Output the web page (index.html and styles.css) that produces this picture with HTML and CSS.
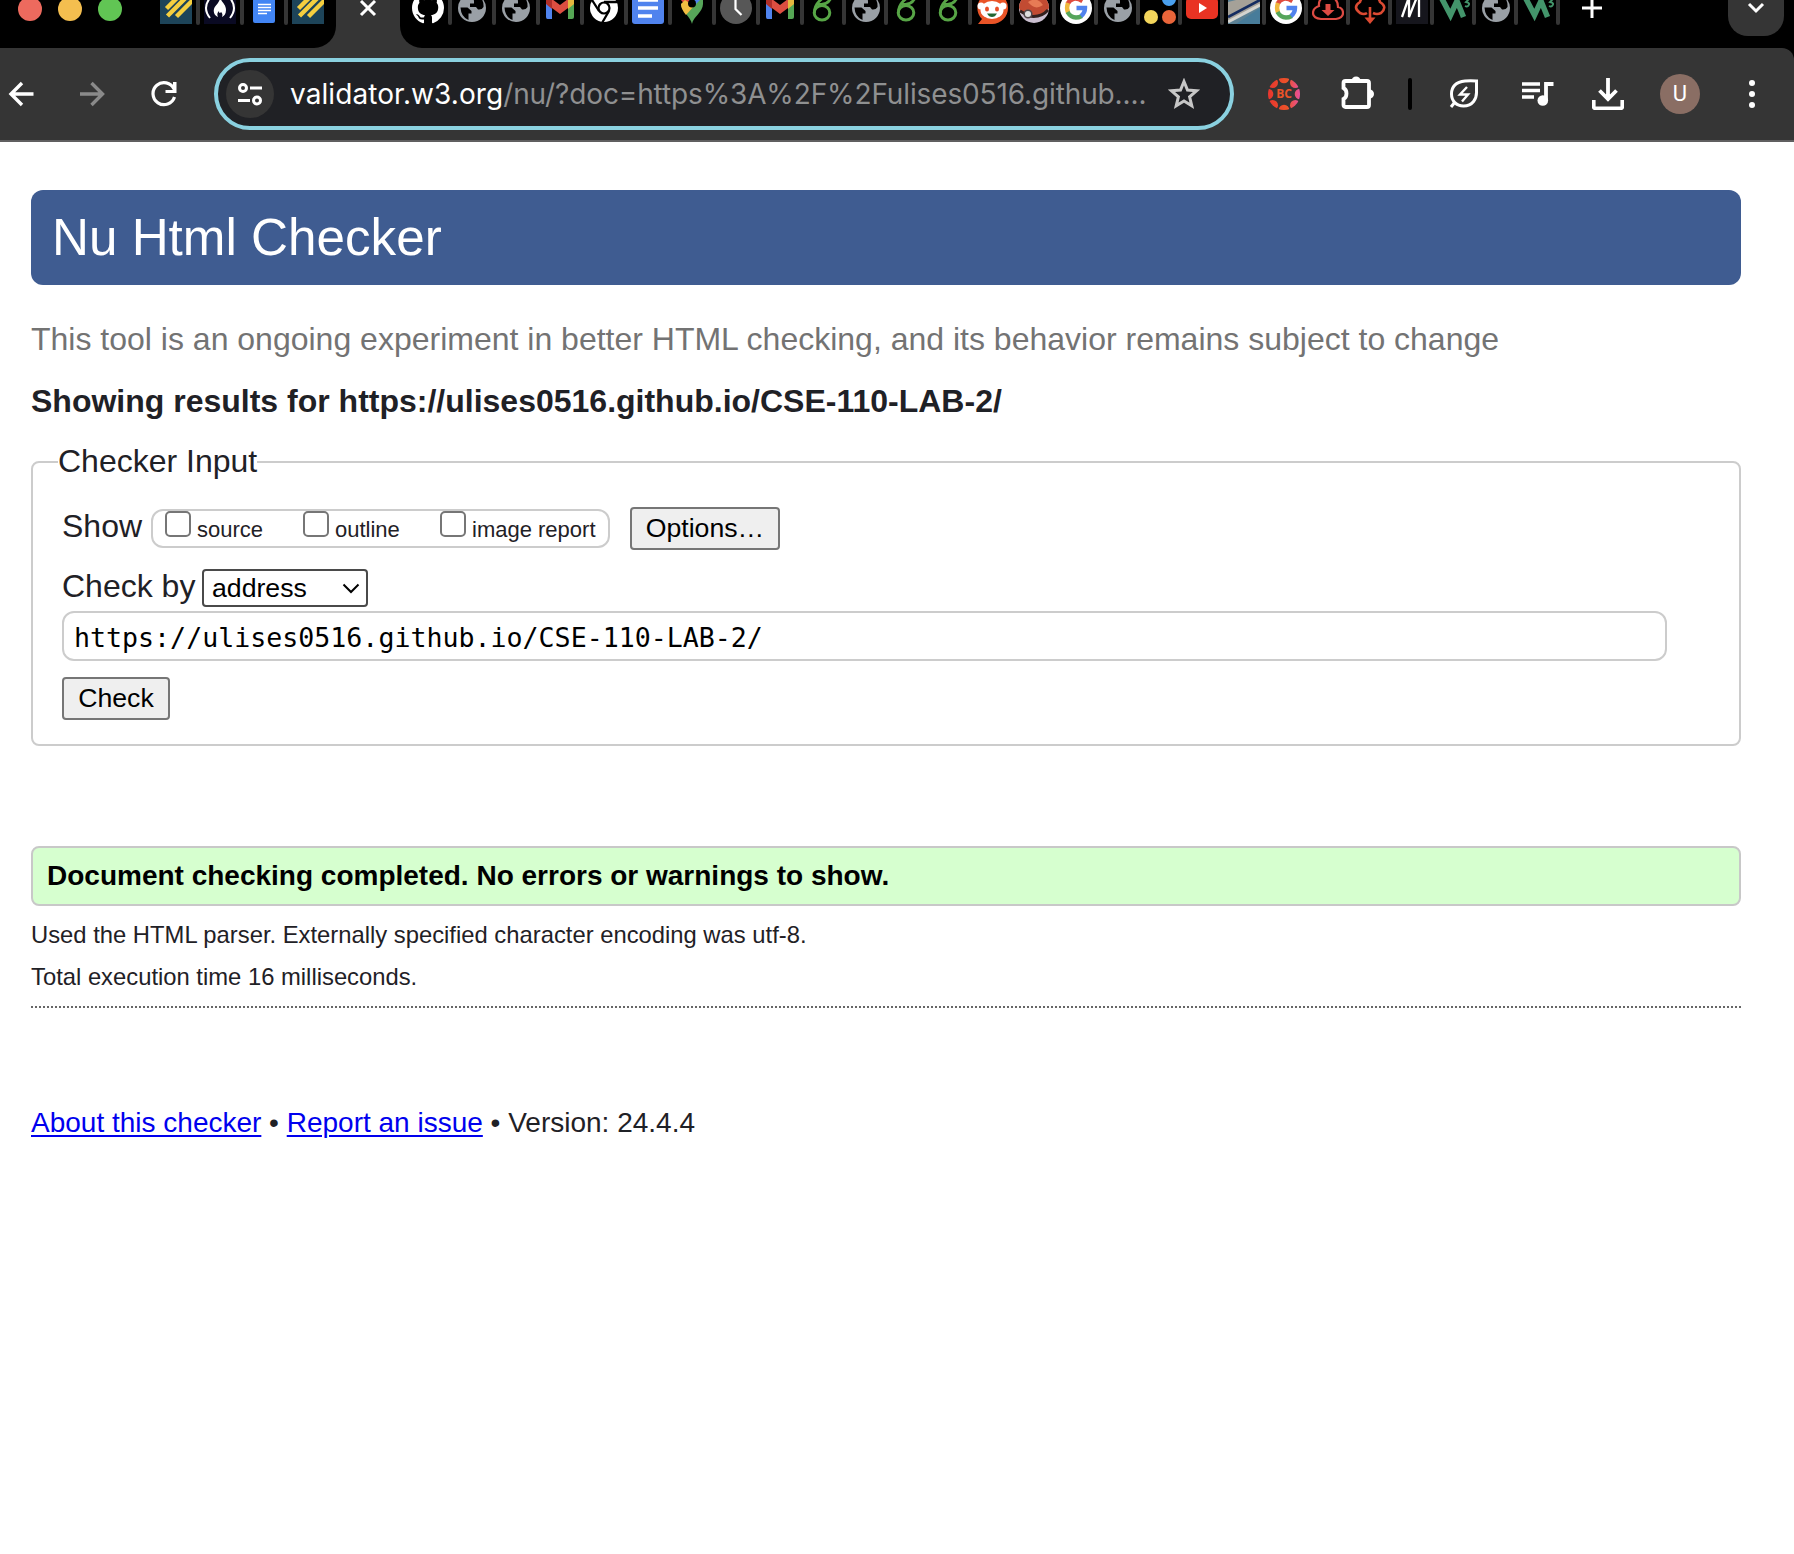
FILE: index.html
```html
<!DOCTYPE html>
<html lang="en">
<head>
<meta charset="utf-8">
<title>Nu Html Checker</title>
<link rel="stylesheet" href="styles.css">
</head>
<body>
<svg class="defs" width="0" height="0" aria-hidden="true">
  <symbol id="i-stripes" viewBox="0 0 32 32"><path fill="#1d4459" d="M0 0h32v32H0z"/><path stroke="#f5cf3f" stroke-width="4.4" d="M6.500 16.500 22 1M7.500 24 27 4.500M16.500 24.500 35 6" fill="none"/></symbol>
  <symbol id="i-fcc" viewBox="0 0 32 32"><path fill="#0a0a23" d="M0 0h32v32H0z"/><path fill="none" stroke="#fff" stroke-width="2" d="M6 6Q-2 16 6 26M26 6q8 10 0 20"/><path fill="#fff" d="M16 5c1 5 6 7 6 13 0 4-2 6-4 7 1-3 0-4-1-5-1 2-2 1-2-1-2 2-2 4-1 6-3-1-5-4-4-8 1-4 6-6 6-12z"/></symbol>
  <symbol id="i-docs" viewBox="0 0 32 32"><path fill="#4285f4" d="M5 0h16l6 7v22q0 2-2 2H7q-2 0-2-2z"/><path stroke="#fff" stroke-width="1.6" d="M10 12.500h13M10 15.500h13M10 18.500h13M10 21.500h9"/></symbol>
  <symbol id="i-docs2" viewBox="0 0 32 32"><path fill="#5083ee" d="M0 0h32v29q0 3-3 3H3q-3 0-3-3z"/><path stroke="#fff" stroke-width="3.600" d="M6 8h20M6 16h20M6 24h14"/></symbol>
  <symbol id="i-github" viewBox="0 0 16 16"><path fill="#fff" d="M8 0C3.58 0 0 3.58 0 8c0 3.54 2.29 6.53 5.47 7.59.4.07.55-.17.55-.38 0-.19-.01-.82-.01-1.49-2.01.37-2.53-.49-2.69-.94-.09-.23-.48-.94-.82-1.13-.28-.15-.68-.52-.01-.53.63-.01 1.08.58 1.23.82.72 1.21 1.87.87 2.33.66.07-.52.28-.87.51-1.07-1.78-.2-3.64-.89-3.64-3.95 0-.87.31-1.59.82-2.15-.08-.2-.36-1.02.08-2.12 0 0 .67-.21 2.2.82.64-.18 1.32-.27 2-.27s1.36.09 2 .27c1.53-1.04 2.2-.82 2.2-.82.44 1.1.16 1.92.08 2.12.51.56.82 1.27.82 2.15 0 3.07-1.87 3.75-3.65 3.95.29.25.54.73.54 1.48 0 1.07-.01 1.93-.01 2.2 0 .21.15.46.55.38A8.01 8.01 0 0 0 16 8c0-4.42-3.58-8-8-8z"/></symbol>
  <symbol id="i-globe" viewBox="0 0 32 32"><circle cx="16" cy="16" r="14" fill="#9aa0a6"/><path fill="#000" d="M4.500 15.500h7l4 3.500v2.500h-3v6.500Q5 25 4.500 15.500zM17 4h6q5 4 4.500 11-1.500 3-5.500 2.500l-2-2.500h-6v-3.500h4V9z"/></symbol>
  <symbol id="i-gmail" viewBox="0 0 32 32"><path fill="#4f83ee" d="M2 9h6v18H3.500Q2 27 2 25z"/><path fill="#55a654" d="M24 9h6v16q0 2-2 2h-4z"/><path fill="#e6b73f" d="M24 7l6-1v6l-6 5z"/><path fill="#b0302a" d="M2 6l6 1v10l-6-5z"/><path fill="#dc4e41" d="M8 7l8 6 8-6v9l-8 6-8-6z"/></symbol>
  <symbol id="i-chrome" viewBox="0 0 32 32"><circle cx="16" cy="16" r="14" fill="#fff"/><circle cx="16" cy="16" r="5.500" fill="none" stroke="#000" stroke-width="2.200"/><path fill="none" stroke="#000" stroke-width="2.300" d="M16 10h13M11 19 4 8M21 19l-7 12"/></symbol>
  <symbol id="i-maps" viewBox="0 0 32 32"><path fill="#56a559" d="M5 12c0 7 10 13 11 20 1-7 11-12 11-20V5z"/><path fill="#4d83ed" d="M16 0q8 0 10 6l-9 9-5-5z"/><path fill="#e04a3f" d="M5 8q2-6 9-8l-1 10-4 3z"/><path fill="#f2bd42" d="M5 12l4-4 9 6-8 9q-5-6-5-11z"/><circle cx="16" cy="11.500" r="4" fill="#000"/></symbol>
  <symbol id="i-clock" viewBox="0 0 32 32"><circle cx="16" cy="16" r="16" fill="#575757"/><path fill="none" stroke="#fff" stroke-width="2.200" d="M15.500 5v12l6 6"/></symbol>
  <symbol id="i-leafo" viewBox="0 0 32 32"><ellipse cx="14" cy="20.800" rx="7.800" ry="7.200" fill="none" stroke="#57a546" stroke-width="3"/><path fill="none" stroke="#57a546" stroke-width="2.800" d="M6.500 21Q6 11 18 4M10 12q9 2 13-6"/></symbol>
  <symbol id="i-reddit" viewBox="0 0 32 32"><path fill="#ea5427" d="M16 0a16 16 0 0 1 0 32H2l4-5A16 16 0 0 1 16 0z"/><circle cx="5" cy="14" r="3.500" fill="#fff"/><circle cx="27" cy="14" r="3.500" fill="#fff"/><ellipse cx="16" cy="18" rx="11.500" ry="9" fill="#fff"/><ellipse cx="11" cy="17" rx="2" ry="2.600" fill="#e8502a"/><ellipse cx="21" cy="17" rx="2" ry="2.600" fill="#e8502a"/><path fill="#263" d="M11 21.500h10q-2 3.500-5 3.500t-5-3.500z"/></symbol>
  <symbol id="i-ball" viewBox="0 0 32 32"><circle cx="16" cy="16" r="15" fill="#cbbfd0"/><path fill="#c24b32" d="M1 16a15 15 0 0 1 30 0q-2 6-12 8L3 20z"/><path fill="#e77b55" d="M10 10q9-6 15 3-8 6-15-3z"/><path fill="none" stroke="#33201e" stroke-width="3" d="M2 19l9 5q12 2 19-6"/><circle cx="10" cy="22" r="3.800" fill="#ddd" stroke="#50474a" stroke-width="1.500"/></symbol>
  <symbol id="i-google" viewBox="0 0 32 32"><circle cx="16" cy="16" r="16" fill="#fff"/><g fill="none" stroke-width="4.400"><path stroke="#df4b3e" d="M7.500 12q5-9 15-3"/><path stroke="#f0b93d" d="M8 11q-2 5 .200 10"/><path stroke="#55a55b" d="M7.500 20q5 8.500 14.500 4"/><path stroke="#5083ee" d="M16.500 16h8.500q0 5-4 8"/></g></symbol>
  <symbol id="i-dots" viewBox="0 0 32 32"><circle cx="25" cy="7" r="7" fill="#4aa0ee"/><circle cx="7" cy="25" r="7" fill="#f3d55b"/><circle cx="25" cy="25" r="7" fill="#e9653a"/></symbol>
  <symbol id="i-yt" viewBox="0 0 32 32"><rect y="5" width="32" height="22" rx="5" fill="#e93323"/><path fill="#fff" d="M13 11l8 5-8 5z"/></symbol>
  <symbol id="i-photo" viewBox="0 0 32 32"><path fill="#5c8194" d="M0 0h32v32H0z"/><path fill="#477c9a" d="M32 16v16H8z"/><path fill="#a5a198" d="M0 10 24 4l8 6v4L0 30z"/><path stroke="#d5d4cf" stroke-width="3" d="M0 30 32 13"/><path stroke="#142c60" stroke-width="2.600" d="M0 25 32 8"/></symbol>
  <symbol id="i-cloud" viewBox="0 0 32 32"><path fill="none" stroke="#dd4b43" stroke-width="2.200" d="M9 27h15q7-1 7-6t-5-6Q26 5 16 5T7 14q-6 2-6 7t8 6z"/><path fill="#dd4b43" d="M13.500 12h5v6h4L16 24l-6.500-6h4z"/></symbol>
  <symbol id="i-cloud2" viewBox="0 0 32 32"><path fill="none" stroke="#dc4a32" stroke-width="2.600" d="M13 21q-3 2-7 0-8-6 0-11 2-7 10-7t10 7q8 5 1 11-4 2-8 0M16 15v13"/><path fill="#dc4a32" d="M10.500 25.500h11L16 32z"/></symbol>
  <symbol id="i-m" viewBox="0 0 32 32"><path fill="#16161d" d="M0 0h32v32H0z"/><path fill="none" stroke="#fff" stroke-width="2.300" d="M6 25 13 5v20L21 5h2v20"/></symbol>
  <symbol id="i-w3" viewBox="0 0 32 32"><path fill="none" stroke="#43956b" stroke-width="5.500" d="M3 5l9.500 18L19 9l6.500 16"/><path fill="none" stroke="#43956b" stroke-width="1.800" d="M27 7h4l-3 3q5 1 2 4-1 1-3 0"/></symbol>
</svg>

<div class="browser">
  <header class="strip">
    <div class="tabs tabs-left">
      <div class="lights"><i class="red"></i><i class="yellow"></i><i class="green"></i></div>
      <div class="tab"><svg><use href="#i-stripes"/></svg></div>
      <div class="tab"><svg><use href="#i-fcc"/></svg></div>
      <div class="tab"><svg><use href="#i-docs"/></svg></div>
      <div class="tab last"><svg><use href="#i-stripes"/></svg></div>
    </div>
    <div class="active-tab"><svg width="18" height="18" viewBox="0 0 18 18"><path d="M2 2l14 14M16 2 2 16" stroke="#fff" stroke-width="3"/></svg></div>
    <div class="tabs tabs-right">
      <div class="tab"><svg><use href="#i-github"/></svg></div>
      <div class="tab"><svg><use href="#i-globe"/></svg></div>
      <div class="tab"><svg><use href="#i-globe"/></svg></div>
      <div class="tab"><svg><use href="#i-gmail"/></svg></div>
      <div class="tab"><svg><use href="#i-chrome"/></svg></div>
      <div class="tab"><svg><use href="#i-docs2"/></svg></div>
      <div class="tab"><svg><use href="#i-maps"/></svg></div>
      <div class="tab"><svg><use href="#i-clock"/></svg></div>
      <div class="tab"><svg><use href="#i-gmail"/></svg></div>
      <div class="tab narrow"><svg><use href="#i-leafo"/></svg></div>
      <div class="tab narrow"><svg><use href="#i-globe"/></svg></div>
      <div class="tab narrow"><svg><use href="#i-leafo"/></svg></div>
      <div class="tab narrow"><svg><use href="#i-leafo"/></svg></div>
      <div class="tab narrow"><svg><use href="#i-reddit"/></svg></div>
      <div class="tab narrow"><svg><use href="#i-ball"/></svg></div>
      <div class="tab narrow"><svg><use href="#i-google"/></svg></div>
      <div class="tab narrow"><svg><use href="#i-globe"/></svg></div>
      <div class="tab narrow"><svg><use href="#i-dots"/></svg></div>
      <div class="tab narrow"><svg><use href="#i-yt"/></svg></div>
      <div class="tab narrow"><svg><use href="#i-photo"/></svg></div>
      <div class="tab narrow"><svg><use href="#i-google"/></svg></div>
      <div class="tab narrow"><svg><use href="#i-cloud"/></svg></div>
      <div class="tab narrow"><svg><use href="#i-cloud2"/></svg></div>
      <div class="tab narrow"><svg><use href="#i-m"/></svg></div>
      <div class="tab narrow"><svg><use href="#i-w3"/></svg></div>
      <div class="tab narrow"><svg><use href="#i-globe"/></svg></div>
      <div class="tab narrow"><svg><use href="#i-w3"/></svg></div>
      <svg class="plus" viewBox="0 0 20 20"><path d="M10 0v20M0 10h20" stroke="#fff" stroke-width="3"/></svg>
      <div class="tab-menu"><svg width="18" height="12" viewBox="0 0 18 12"><path d="M2 2l7 7 7-7" fill="none" stroke="#fff" stroke-width="3"/></svg></div>
    </div>
  </header>

  <div class="toolbar">
    <svg class="back" viewBox="0 0 26 26"><path d="M25.500 13H3M14 2 3 13l11 11" fill="none" stroke="#fff" stroke-width="3.400"/></svg>
    <svg class="forward" viewBox="0 0 26 26"><path d="M0 13h22M11.500 2l11 11-11 11" fill="none" stroke="#8a8a8a" stroke-width="3.400"/></svg>
    <svg class="reload" viewBox="0 0 26 26"><path d="M23 8A11 11 0 1 0 23.500 16" fill="none" stroke="#fff" stroke-width="3.200"/><path d="M25.500 1v11h-11V9H22V1z" fill="#fff"/></svg>
    <div class="omnibox">
      <span class="site-info"><svg width="26" height="24" viewBox="0 0 26 24" fill="none" stroke="#fff" stroke-width="3"><circle cx="6" cy="6" r="3.500"/><path d="M13 6h12M1 18.500h12"/><circle cx="20" cy="18.500" r="3.500"/></svg></span>
      <span class="url"><b>validator.w3.org</b>/nu/?doc=https%3A%2F%2Fulises0516.github....</span>
      <svg class="star" viewBox="0 0 32 32"><path d="M16 3.500l3.500 8.500 9 .800-6.900 6 2.200 9L16 23l-7.800 4.800 2.200-9-6.900-6 9-.800z" fill="none" stroke="#c7c7c7" stroke-width="3"/></svg>
    </div>
    <svg class="ext" viewBox="0 0 32 32">
      <defs>
        <linearGradient id="bc" gradientUnits="userSpaceOnUse" x1="0" y1="16" x2="32" y2="16"><stop offset="0" stop-color="#e8352f"/><stop offset=".6" stop-color="#ec5328"/><stop offset="1" stop-color="#e94f9f"/></linearGradient>
        <clipPath id="disc"><circle cx="16" cy="16" r="16"/></clipPath>
      </defs>
      <g fill="url(#bc)" clip-path="url(#disc)"><circle cx="16" cy="0" r="5.300"/><circle cx="27.300" cy="4.700" r="5.300"/><circle cx="32" cy="16" r="5.300"/><circle cx="27.300" cy="27.300" r="5.300"/><circle cx="16" cy="32" r="5.300"/><circle cx="4.700" cy="27.300" r="5.300"/><circle cx="0" cy="16" r="5.300"/><circle cx="4.700" cy="4.700" r="5.300"/></g>
      <text class="ext-text" x="16" y="20.300" text-anchor="middle">BC</text>
    </svg>
    <svg class="puzzle" viewBox="0 0 34 34"><path d="M2.500 13V8q0-2 2-2H26q2 0 2 2v22q0 2-2 2H4.500q-2 0-2-2v-6q3-1.500 3-5.500t-3-5.500z" fill="none" stroke="#fff" stroke-width="3.800"/><path d="M10.500 6a4.600 4.600 0 0 1 9.200 0zM28 14q5 1 5 5t-5 5z" fill="#fff"/></svg>
    <i class="divider"></i>
    <svg class="saver" viewBox="0 0 30 30" fill="none" stroke="#fff" stroke-width="3"><path d="M27.500 2q-6-.500-11.500 0C7 3 2.500 8 2.500 15c0 7 5 12 12 12 9 0 13.500-7 13-15z"/><path d="M6 23l-4 5"/><path d="M18 8 11 15.500h8L13 22.500" stroke-width="2.400"/></svg>
    <svg class="music" viewBox="0 0 32 26"><path d="M0 3h18M0 9.500h18M0 16h12" stroke="#fff" stroke-width="3.600"/><path d="M24 20V3H31.500" fill="none" stroke="#fff" stroke-width="3.800"/><circle cx="20.800" cy="19.500" r="5.300" fill="#fff"/></svg>
    <svg class="download" viewBox="0 0 32 32"><path d="M16 0v21M7.500 12.500 16 21l8.500-8.500M1.700 22v6.500q0 1.800 1.800 1.800h25q1.800 0 1.800-1.800V22" fill="none" stroke="#fff" stroke-width="3.800"/></svg>
    <span class="avatar">U</span>
    <svg class="more" viewBox="0 0 6 28" fill="#fff"><circle cx="3" cy="3" r="3"/><circle cx="3" cy="14" r="3"/><circle cx="3" cy="25" r="3"/></svg>
  </div>
</div>

<main>
  <h1>Nu Html Checker</h1>
  <p class="note">This tool is an ongoing experiment in better HTML checking, and its behavior remains subject to change</p>
  <h2>Showing results for https://ulises0516.github.io/CSE-110-LAB-2/</h2>
  <fieldset>
    <legend>Checker Input</legend>
    <div class="show-row">
      <span class="show-label">Show</span>
      <div class="shown">
        <label class="source"><input type="checkbox">source</label>
        <label class="outline"><input type="checkbox">outline</label>
        <label><input type="checkbox">image report</label>
      </div>
      <button class="options">Options…</button>
    </div>
    <div class="by-row">
      <span>Check by</span>
      <div class="select">address<svg width="18" height="11" viewBox="0 0 18 11"><path d="M1.500 1.500 9 9l7.500-7.500" fill="none" stroke="#000" stroke-width="2"/></svg></div>
    </div>
    <div class="address">https://ulises0516.github.io/CSE-110-LAB-2/</div>
    <button class="check">Check</button>
  </fieldset>
  <p class="success">Document checking completed. No errors or warnings to show.</p>
  <div class="details">
    <p>Used the HTML parser. Externally specified character encoding was utf-8.</p>
    <p>Total execution time 16 milliseconds.</p>
  </div>
  <footer><a href="#">About this checker</a> • <a href="#">Report an issue</a> • Version: 24.4.4</footer>
</main>
</body>
</html>
```
FILE: styles.css
```css
* { box-sizing: border-box; }
body {
  margin: 0;
  height: 1554px;
  overflow: hidden;
  background: #fff;
  color: #1f2126;
  font-family: "Liberation Sans", Arial, sans-serif;
}
p, h1, h2 { margin: 0; }
svg { display: block; flex: none; }
.defs { position: absolute; }

/* Tab strip */
.browser { background: #000; }
.strip { display: flex; height: 48px; overflow: hidden; background: #353535; }
.tabs { display: flex; align-items: flex-start; height: 48px; background: #000; }
.tabs-left { width: 336px; border-bottom-right-radius: 22px; }
.tabs-right { flex: 1; padding-left: 12px; border-bottom-left-radius: 22px; }
.lights { display: flex; gap: 16px; width: 142px; margin: -3px 0 0 18px; }
.lights i { width: 24px; height: 24px; border-radius: 50%; }
.red { background: #ed6a5e; }
.yellow { background: #f4be4f; }
.green { background: #61c554; }
.tab { display: flex; flex: none; width: 44px; height: 25px; }
.tab svg { width: 32px; height: 32px; margin-top: -8px; }
.tab::after { content: ""; width: 4px; margin-left: 4px; background: #353535; border-radius: 0 0 2px 2px; }
.tab.narrow { width: 42px; }
.tab.narrow::after { margin-left: 2px; }
.tab.last::after { display: none; }
.active-tab { width: 64px; padding: 0 0 0 23px; }
.active-tab svg { margin-top: -1px; }
.plus { width: 20px; height: 20px; margin: -2px 0 0 18px; }
.tab-menu {
  display: flex;
  justify-content: center;
  width: 56px;
  height: 36px;
  margin: 0 10px 0 auto;
  padding-top: 2px;
  background: #353535;
  border-radius: 0 0 20px 20px;
}

/* Toolbar */
.toolbar {
  display: flex;
  align-items: center;
  height: 94px;
  padding: 0 39px 0 8px;
  background: #353535;
  border-bottom: 2px solid #605f60;
  border-top-right-radius: 12px;
}
.back, .forward, .reload { width: 26px; height: 26px; }
.forward { margin-left: 46px; }
.reload { margin-left: 45px; }
.omnibox {
  display: flex;
  align-items: center;
  width: 1020px;
  height: 72px;
  margin-left: 37px;
  padding-left: 8px;
  background: #202125;
  border: 4px solid #8ad1e0;
  border-radius: 36px;
}
.site-info {
  display: flex;
  align-items: center;
  justify-content: center;
  width: 48px;
  height: 48px;
  border-radius: 50%;
  background: #353535;
}
.url {
  width: 862px;
  margin-left: 16px;
  color: #8f9091;
  font: 28px/40px Inter, sans-serif;
  letter-spacing: -0.13px;
  white-space: nowrap;
}
.url b { color: #fff; font-weight: 400; letter-spacing: 0.08px; }
.star { width: 32px; height: 32px; margin-left: 16px; }
.ext { width: 32px; height: 32px; margin-left: 34px; }
.ext-text { fill: #ec5328; font: 700 12px "Open Sans", sans-serif; }
.puzzle { width: 34px; height: 34px; margin: -5px 0 0 41px; }
.divider { width: 4px; height: 32px; margin-left: 33px; border-radius: 2px; background: #000; }
.saver { width: 30px; height: 30px; margin-left: 37px; }
.music { width: 32px; height: 26px; margin-left: 43px; }
.download { width: 32px; height: 32px; margin-left: 38px; }
.avatar {
  width: 40px;
  height: 40px;
  margin-left: 36px;
  border-radius: 50%;
  background: #8a6e64;
  color: #fff;
  font: 22px/40px Roboto, sans-serif;
  text-align: center;
}
.more { width: 6px; height: 28px; margin-left: auto; }

/* Checker page */
main { padding: 48px 53px 0 31px; }
h1 {
  padding-left: 21px;
  border-radius: 12px;
  background: #3f5c91;
  color: #fff;
  font-size: 51.2px;
  font-weight: 400;
  line-height: 95px;
}
.note { margin-top: 34px; color: #737373; font-size: 32px; line-height: 40px; white-space: nowrap; }
h2 { margin-top: 22px; font-size: 32px; line-height: 40px; }
fieldset {
  height: 305px;
  margin: 20px 0 0;
  padding: 24px 29px 0;
  border: 2px solid #ccc;
  border-radius: 8px;
}
legend { margin-left: -4px; padding: 0 0 2px; font-size: 32px; line-height: 40px; }
button {
  display: block;
  height: 43px;
  padding: 0;
  border: 2px solid #767676;
  border-radius: 4px;
  background: #efefef;
  color: #000;
  font: 26.67px/37px "Liberation Sans", Arial, sans-serif;
}
.show-row { display: flex; align-items: flex-start; height: 43px; }
.show-label { width: 89px; font-size: 32px; line-height: 38px; }
.shown {
  display: flex;
  width: 459px;
  height: 39px;
  margin-top: 2px;
  padding-left: 12px;
  border: 2px solid #ccc;
  border-radius: 12px;
}
.shown label { display: flex; font-size: 22px; line-height: 38px; height: 35px; white-space: nowrap; }
.shown input {
  appearance: none;
  width: 26px;
  height: 26px;
  margin: 0 6px 0 0;
  border: 2px solid #767676;
  border-radius: 5px;
  background: #fff;
}
.source { width: 138px; }
.outline { width: 137px; }
.options { width: 150px; margin-left: 20px; }
.by-row { display: flex; height: 38px; margin-top: 19px; font-size: 32px; line-height: 34px; }
.by-row span { width: 140px; white-space: nowrap; }
.select {
  display: flex;
  justify-content: space-between;
  align-items: center;
  width: 166px;
  height: 38px;
  padding: 0 6px 0 8px;
  border: 2px solid #4a4a4a;
  border-radius: 4px;
  color: #000;
  font-size: 26.67px;
}
.address {
  width: 1605px;
  height: 50px;
  margin-top: 4px;
  padding: 2px 0 0 10px;
  border: 2px solid #ccc;
  border-radius: 12px;
  color: #000;
  font: 26.62px/46px "DejaVu Sans Mono", monospace;
}
.check { width: 108px; margin-top: 16px; }
.success {
  height: 60px;
  margin-top: 100px;
  padding-left: 14px;
  border: 2px solid #c8c8c8;
  border-radius: 8px;
  background: #d6ffcf;
  color: #000;
  font-size: 28px;
  font-weight: 700;
  line-height: 55px;
}
.details {
  margin-top: 8px;
  padding-bottom: 8px;
  border-bottom: 2px dotted #666;
  font-size: 23.8px;
  line-height: 42px;
}
footer { margin-top: 95px; font-size: 28px; line-height: 40px; }
footer a { color: #0000ee; text-underline-offset: 3px; text-decoration-thickness: 2px; }
```
